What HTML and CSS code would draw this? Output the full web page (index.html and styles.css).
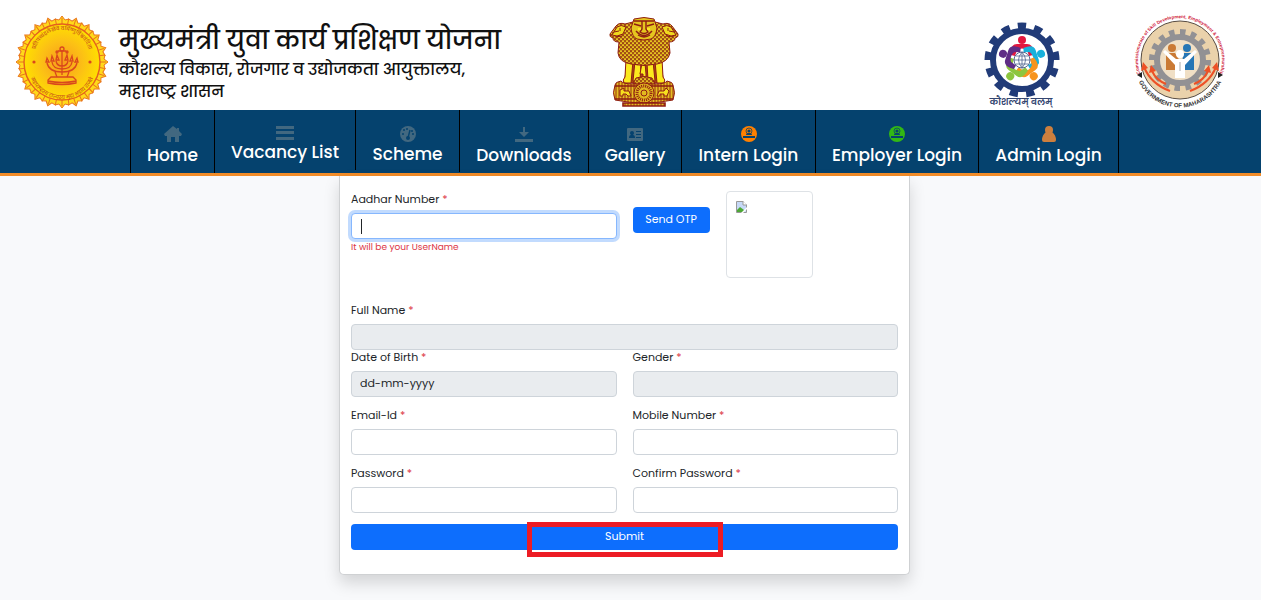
FILE: index.html
```
<!DOCTYPE html>
<html lang="en">
<head>
    <meta charset="utf-8">
    <meta name="viewport" content="width=device-width, initial-scale=1.0">
    <title>मुख्यमंत्री युवा कार्य प्रशिक्षण योजना</title>
    <link rel="stylesheet" href="styles.css">
</head>

<body>
<header class="header">
    <div class="brand">
        <svg class="seal" viewBox="0 0 96 94" aria-hidden="true">
            <defs>
                <radialGradient id="sealFill">
                    <stop offset="0" stop-color="#f79a1c"/>
                    <stop offset=".55" stop-color="#fcc015"/>
                    <stop offset="1" stop-color="#ffdf00"/>
                </radialGradient>
                <path id="petal" d="M48 1 L51 5 L55 4 L54 12 H42 L41 4 L45 5 Z M48 3 V11" fill="#ffd91a" stroke="#e9751c" stroke-width="1"/>
                <g id="petals">
                    <use href="#petal"/>
                    <use href="#petal" transform="rotate(18 48 47)"/>
                    <use href="#petal" transform="rotate(36 48 47)"/>
                    <use href="#petal" transform="rotate(54 48 47)"/>
                    <use href="#petal" transform="rotate(72 48 47)"/>
                </g>
                <path id="sealTop" d="M20 43 A28 28 0 0 1 76 43"/>
                <path id="sealBottom" d="M14 50 A34 34 0 0 0 82 50"/>
            </defs>
            <use href="#petals"/>
            <use href="#petals" transform="rotate(90 48 47)"/>
            <use href="#petals" transform="rotate(180 48 47)"/>
            <use href="#petals" transform="rotate(270 48 47)"/>
            <circle cx="48" cy="47" r="38" fill="url(#sealFill)" stroke="#e4601e" stroke-width="1.4"/>
            <g fill="#c8501b" font-size="5" font-weight="500">
                <text><textPath href="#sealTop" startOffset="50%" text-anchor="middle">प्रतिपच्चंद्रलेखेव वर्धिष्णुर्विश्ववंदिता</textPath></text>
                <text><textPath href="#sealBottom" startOffset="50%" text-anchor="middle">महाराष्ट्रस्य राज्यस्य मुद्रा भद्राय राजते</textPath></text>
            </g>
            <circle cx="20" cy="47" r="1.6" fill="#d9471c"/>
            <circle cx="76" cy="47" r="1.6" fill="#d9471c"/>
            <g fill="none" stroke="#d9471c" stroke-width="1.3">
                <path d="M48 36 V60 M44 36 H52 M33 48 Q35 57 48 57 Q61 57 63 48 M38 47 Q39 54 48 54 Q57 54 58 47 M42 46 Q43 51 48 51 Q53 51 54 46 M41 57 L43 62 M55 57 L53 62"/>
                <path d="M37 62 H59 L62 65 V68 Q48 71 34 68 V65 Z M34 66 Q48 69 62 66"/>
                <path d="M32 47 L33 43 L35 47 Z M37 46 L38 41 L40 46 Z M42 45 L43 40 L45 45 Z M51 45 L53 40 L54 45 Z M56 46 L58 41 L59 46 Z M61 47 L63 43 L64 47 Z"/>
                <circle cx="48" cy="34" r="2"/>
                <circle cx="43" cy="37" r="1"/>
                <circle cx="53" cy="37" r="1"/>
            </g>
        </svg>
        <div class="brand-text">
            <h1>मुख्यमंत्री युवा कार्य प्रशिक्षण योजना</h1>
            <p>कौशल्य विकास, रोजगार व उद्योजकता आयुक्तालय,<br>महाराष्ट्र शासन</p>
        </div>
    </div>

    <svg class="emblem" viewBox="0 0 70 90" aria-hidden="true">
        <defs>
            <pattern id="mane" width="4" height="4" patternUnits="userSpaceOnUse">
                <rect width="4" height="4" fill="#e6c421"/>
                <path d="M0 0 Q2 4 4 0 M-2 2 Q0 6 2 2 M2 2 Q4 6 6 2" fill="none" stroke="#8d2a10" stroke-width=".9"/>
            </pattern>
            <pattern id="stripe" width="3" height="4" patternUnits="userSpaceOnUse">
                <rect width="3" height="4" fill="#e5bd22"/>
                <path d="M1 0 V4" stroke="#97330f" stroke-width="1"/>
            </pattern>
        </defs>
        <g stroke="#8f1d12" stroke-width="1">
            <path d="M19 43 L15 66 H55 L51 43 Z" fill="#a84614"/>
            <path d="M17 42 L16 60 Q13 63 15 66 H22 L24 44 Z M26 44 L24 64 H31 L32 45 Z M38 45 L39 64 H46 L44 44 Z M46 44 L48 66 H55 Q57 63 54 60 L53 42 Z" fill="#fbe91e"/>
            <path d="M33 46 L31 57 H34 V66 H37 V57 L36 46 Z" fill="#fbe91e"/>
            <path d="M24 5 L16 7 Q10 5 7 9 L1 17 Q0 20 4 21 Q4 25 10 25 L9 36 Q10 45 22 47 Q35 50 48 47 Q59 45 61 36 L60 25 Q66 25 66 21 Q70 20 69 17 L63 9 Q60 5 54 7 L46 5 Z" fill="url(#mane)"/>
            <path d="M8 10 Q12 7 17 10 L14 17 L8 19 L3 18 Z M62 10 Q58 7 53 10 L56 17 L62 19 L67 18 Z" fill="#efd91f"/>
            <path d="M5 15 L10 14 M6 20 L13 19 M11 11 V14 M65 15 L60 14 M64 20 L57 19 M59 11 V14" fill="none"/>
            <path d="M25 2 Q35 -1 45 2 L48 11 Q47 20 42 22 Q35 24 28 22 Q23 20 22 11 Z" fill="#e5c51f"/>
            <path d="M25 7 L32 9 M38 9 L45 7 M33 4 V12 L31 15 Q35 18 39 15 L37 12 V4 M27 14 Q35 23 43 14 M29 18 Q35 22 41 18 M25 4 H45" fill="none" stroke-width="1.4"/>
            <path d="M29 12 H32 M38 12 H41" stroke="#fff22a" stroke-width="1.6"/>
            <path d="M27 61 Q35 58 43 61 L46 67 H24 Z" fill="url(#mane)"/>
            <path d="M12 64 Q6 65 6 68 Q3 76 6 83 Q35 89 64 83 Q67 76 64 68 Q64 65 58 64 Q56 67 46 67 H24 Q14 67 12 64 Z" fill="url(#stripe)"/>
            <path d="M6 69 H64 M6 82 H64" stroke-width="1.4"/>
            <path d="M11 79 V73 L15 71 V74 H20 L22 79 H19 L17 77 H14 V79 Z M48 79 L50 74 H55 L57 71 L60 74 L58 79 H55 V77 H51 V79 Z" fill="#f7e01e"/>
            <circle cx="35" cy="76" r="10" fill="#e2b91f"/>
            <circle cx="35" cy="76" r="7" fill="none" stroke-width="3" stroke-dasharray="1 1"/>
            <circle cx="35" cy="76" r="3" fill="none"/>
            <path d="M14 86 H56 V89 H14 Z" fill="url(#stripe)" stroke-width="1.6"/>
        </g>
    </svg>

    <div class="partners">
        <svg class="gear" viewBox="0 0 80 86" aria-hidden="true">
            <circle cx="40" cy="41" r="33" fill="none" stroke="#213b78" stroke-width="9" pathLength="26" stroke-dasharray="1 1" transform="rotate(-97 40 41)"/>
            <circle cx="40" cy="41" r="29" fill="#fff" stroke="#213b78" stroke-width="6"/>
            <defs>
                <g id="person">
                    <circle cx="40" cy="21" r="4"/>
                    <path d="M29 36 Q28 25 35 25 H45 Q52 25 51 36 L47 37 L45 31 Q40 28 35 31 L33 37 Z"/>
                </g>
            </defs>
            <use href="#person" fill="#e2173f" transform="rotate(0 40 41)"/>
            <use href="#person" fill="#19b1dc" transform="rotate(72 40 41)"/>
            <use href="#person" fill="#f7941e" transform="rotate(144 40 41)"/>
            <use href="#person" fill="#8dc63f" transform="rotate(216 40 41)"/>
            <use href="#person" fill="#5f2d86" transform="rotate(288 40 41)"/>
            <circle cx="40" cy="41" r="8" fill="#fff" stroke="#51658f"/>
            <path d="M32 41 H48 M34 37 H46 M34 45 H46 M40 33 V49 M40 33 Q33 41 40 49 M40 33 Q47 41 40 49" fill="none" stroke="#51658f" stroke-width=".8"/>
            <text x="39" y="86" text-anchor="middle" font-size="9" font-weight="600" fill="#33456f">कौशल्यम् बलम्</text>
        </svg>
        <svg class="gov" viewBox="0 0 96 94" aria-hidden="true">
            <defs>
                <path id="govTop" d="M10 63 A42 42 0 1 1 86 63"/>
                <path id="govBottom" d="M3 56 A46 46 0 0 0 93 56"/>
            </defs>
            <circle cx="48" cy="45" r="39" fill="#ead2ab" stroke="#574c42" stroke-width="1"/>
            <circle cx="48" cy="45" r="28" fill="none" stroke="#929194" stroke-width="6" pathLength="32" stroke-dasharray="1 1"/>
            <circle cx="48" cy="45" r="23" fill="#f0dfc5" stroke="#929194" stroke-width="6"/>
            <circle cx="40" cy="33" r="4" fill="#ca7a35"/>
            <circle cx="55" cy="33" r="4" fill="#2676b5"/>
            <path d="M34 38 H43 L48 46 V55 H34 Z" fill="#ca7a35"/>
            <path d="M51 38 H62 V55 H50 Z" fill="#2676b5"/>
            <circle cx="48" cy="39" r="4" fill="#fff"/>
            <path d="M31 37 L33 35 L44 44 H52 L63 35 L65 37 L53 50 V63 H43 V50 Z" fill="#fff"/>
            <path d="M48 47 V56" stroke="#aaa"/>
            <g fill="none" stroke="#ed5126" stroke-width="2">
                <path d="M38 76 Q19 69 12 52 M34 69 Q24 65 20 56 M58 76 Q77 69 84 52 M62 69 Q72 65 76 56"/>
            </g>
            <path d="M11 47 L9 56 L16 53 Z M19 50 L17 58 L24 56 Z M85 47 L87 56 L80 53 Z M77 50 L79 58 L72 56 Z" fill="#ed5126"/>
            <text class="ring" font-size="4.6" fill="#cf2039"><textPath href="#govTop" startOffset="50%" text-anchor="middle">Commissionerate of Skill Development, Employment &amp; Entrepreneurship</textPath></text>
            <text class="ring" font-size="6" fill="#333"><textPath href="#govBottom" startOffset="50%" text-anchor="middle">GOVERNMENT OF MAHARASHTRA</textPath></text>
            <path d="M5 60 L10 57 V63 Z M91 60 L86 57 V63 Z" fill="#222"/>
        </svg>
    </div>
</header>

<nav class="navbar">
    <ul class="menu">
        <li><a href="#">
            <svg class="icon" viewBox="0 0 18 16"><path d="M9 0 L0 8 L1 10 H3 V16 H7 V11 H11 V16 H15 V10 H17 L18 8 L15 5 V2 H13 V3 Z"/></svg>
            Home</a></li>
        <li><a href="#">
            <svg class="icon icon-bars" viewBox="0 0 18 13"><path d="M0 0 H18 V3 H0 Z M0 5 H18 V8 H0 Z M0 11 H18 V14 H0 Z"/></svg>
            Vacancy List</a></li>
        <li><a href="#">
            <svg class="icon icon-gauge" viewBox="0 0 16 15"><circle cx="8" cy="8" r="8"/><path d="M8 12 L10 4" stroke="#05426e" stroke-width="1.4"/><g fill="#05426e"><circle cx="8" cy="12" r="2"/><circle cx="3" cy="8" r="1"/><circle cx="4" cy="4" r="1"/><circle cx="7" cy="3" r="1"/><circle cx="12" cy="5" r="1"/><circle cx="13" cy="8" r="1"/></g></svg>
            Scheme</a></li>
        <li><a href="#">
            <svg class="icon" viewBox="0 0 18 16"><path d="M8 1 H10 V6 H14 L9 11 L4 6 H8 Z M0 13 H18 V16 H0 Z"/></svg>
            Downloads</a></li>
        <li><a href="#">
            <svg class="icon" viewBox="0 0 18 16"><path fill-rule="evenodd" d="M2 2 H16 Q17 2 17 3 V14 Q17 15 16 15 H2 Q1 15 1 14 V3 Q1 2 2 2 Z M10 5 V6 H15 V5 Z M10 8 V9 H15 V8 Z M10 11 V12 H15 V11 Z M3 12 H9 Q9 9 7 9 Q8 8 8 7 Q8 5 6 5 Q4 5 4 7 Q4 8 5 9 Q3 9 3 12 Z"/></svg>
            Gallery</a></li>
        <li><a href="#">
            <svg class="icon icon-intern" viewBox="0 0 18 16"><circle cx="9" cy="8" r="8"/><circle cx="9" cy="5" r="3" fill="none" stroke="#05426e" stroke-width=".8"/><g fill="#05426e"><circle cx="9" cy="5" r="1.600"/><path d="M6 9 Q6 7 9 7 Q12 7 12 9 Z M3 10 H15 V12 H3 Z"/></g></svg>
            Intern Login</a></li>
        <li><a href="#">
            <svg class="icon icon-employer" viewBox="0 0 18 16"><circle cx="9" cy="8" r="8"/><circle cx="9" cy="5" r="3" fill="none" stroke="#05426e" stroke-width=".8"/><g fill="#05426e"><circle cx="9" cy="5" r="1.600"/><path d="M6 9 Q6 7 9 7 Q12 7 12 9 Z M3 10 H15 V12 H3 Z"/></g></svg>
            Employer Login</a></li>
        <li><a href="#">
            <svg class="icon icon-admin" viewBox="0 0 18 16"><circle cx="9" cy="4" r="4"/><path d="M6 6 H12 Q16 9 16 14 Q16 16 14 16 H4 Q2 16 2 14 Q2 9 6 6 Z"/></svg>
            Admin Login</a></li>
    </ul>
</nav>

<main class="content">
    <form class="card">
        <div class="row row-top">
            <div class="field">
                <label for="aadhar">Aadhar Number <span class="req">*</span></label>
                <input type="text" id="aadhar" class="active">
                <small class="hint">It will be your UserName</small>
            </div>
            <div class="otp">
                <button type="button" class="btn btn-otp">Send OTP</button>
                <div class="photo">
                    <!-- missing photo icon -->
                    <svg class="no-photo" viewBox="0 0 11 12"><path d="M.5 .5 H7 L10.500 4 V11.500 H.5 Z" fill="#c6d9f7" stroke="#999"/><path d="M7 0 V4 H11" fill="#fff" stroke="#999"/><path d="M1 11 V9 L4 6 L8 9 V11 Z" fill="#4da836"/><path d="M5 12 L11 6 V8 L7 12 Z" fill="#fff"/></svg>
                </div>
            </div>
        </div>
        <div class="field">
            <label for="fullname">Full Name <span class="req">*</span></label>
            <input type="text" id="fullname" disabled>
        </div>
        <div class="row">
            <div class="field">
                <label for="dob">Date of Birth <span class="req">*</span></label>
                <input type="text" id="dob" value="dd-mm-yyyy" disabled>
            </div>
            <div class="field">
                <label for="gender">Gender <span class="req">*</span></label>
                <input type="text" id="gender" disabled>
            </div>
            <div class="field">
                <label for="email">Email-Id <span class="req">*</span></label>
                <input type="email" id="email">
            </div>
            <div class="field">
                <label for="mobile">Mobile Number <span class="req">*</span></label>
                <input type="tel" id="mobile">
            </div>
            <div class="field">
                <label for="password">Password <span class="req">*</span></label>
                <input type="password" id="password">
            </div>
            <div class="field">
                <label for="confirm">Confirm Password <span class="req">*</span></label>
                <input type="password" id="confirm">
            </div>
        </div>
        <div class="submit">
            <button type="submit" class="btn btn-submit">Submit</button>
        </div>
    </form>
</main>
</body>
</html>
```
FILE: styles.css
```
*, *:before, *:after {
    box-sizing: border-box;
}

body {
    margin: 0;
    font-family: Poppins, Inter, "Noto Sans", sans-serif;
    font-size: 11px;
    line-height: 14px;
    color: #212529;
    background: #f8f9fb;
}

/* header */
.header {
    display: flex;
    align-items: center;
    min-height: 110px;
    padding: 14px 33px 0 14px;
    background: #fff;
}
.brand {
    display: flex;
    align-items: center;
    flex: 0 0 49%;
    gap: 9px;
}
.brand-text {
    padding-top: 2px;
    color: #111;
    white-space: nowrap;
}
.brand h1 {
    margin: 0;
    font-size: 25px;
    font-weight: 500;
    line-height: 36px;
}
.brand p {
    margin: 0;
    font-size: 16px;
    font-weight: 500;
    line-height: 22px;
}
.seal {
    width: 96px;
    height: 94px;
    flex: none;
}
.emblem {
    width: 70px;
    height: 90px;
    flex: none;
}
.partners {
    display: flex;
    align-items: center;
    gap: 70px;
    margin-left: auto;
}
.gear {
    width: 80px;
    height: 86px;
    overflow: visible;
}
.gov {
    width: 96px;
    height: 94px;
    overflow: visible;
}
.ring {
    font-family: "Liberation Sans", Arial, sans-serif;
    font-weight: bold;
}

/* menu */
.navbar {
    padding-right: 12px;
    background: #05426e;
    border-bottom: 3px solid #f28c28;
}
.menu {
    display: grid;
    grid-template-columns: 85fr 141fr 104fr 129fr 93fr 134fr 163fr 140fr;
    align-items: start;
    max-width: 989px;
    margin: 0 auto;
    padding: 0;
    list-style: none;
}
.menu li {
    border-right: 1px solid #000;
}
.menu li:first-child {
    border-left: 1px solid #000;
}
.menu a {
    display: block;
    padding: 16px 0 4px;
    font-size: 17px;
    font-weight: 500;
    line-height: 27px;
    color: #fff;
    text-align: center;
    text-decoration: none;
    white-space: nowrap;
}
.icon {
    display: block;
    width: 18px;
    height: 16px;
    margin: 0 auto;
    fill: #426880;
    overflow: visible;
}
.icon-bars {
    height: 13px;
}
.icon-gauge {
    height: 15px;
}
.icon-intern {
    fill: #ff8000;
}
.icon-employer {
    fill: #32b814;
}
.icon-admin {
    fill: #cd7f3e;
}

/* form */
.content {
    padding: 0 12px 25px 0;
}
.card {
    max-width: 571px;
    margin: 0 auto;
    padding: 15px 11px 24px;
    background: #fff;
    border: 1px solid #cfd1d3;
    border-top: 0;
    border-radius: 0 0 5px 5px;
    box-shadow: 0 8px 16px rgba(0,0,0,.15);
}
.row {
    display: grid;
    grid-template-columns: 1fr 1fr;
    gap: 11px 16px;
}
.row-top {
    min-height: 112px;
    align-items: start;
}
.field {
    display: flex;
    flex-direction: column;
}
.row-top .field {
    padding-top: 1px;
}
.field label {
    margin-bottom: 7px;
}
.req {
    color: #dc3545;
}
.field input {
    width: 100%;
    height: 26px;
    padding: 3px 8px 5px;
    font: inherit;
    color: #212529;
    background: #fff;
    border: 1px solid #ced4da;
    border-radius: 4px;
    outline: 0;
}
.field input:disabled {
    background: #e9ecef;
}
.field input:focus,
.field input.active {
    border-color: #86b7fe;
    box-shadow: 0 0 0 3px rgba(13,110,253,.25);
}
/* cursor line of the active box */
.field input.active {
    background: #fff linear-gradient(#212529, #212529) no-repeat 9px 50% / 1px 15px;
}
.field input.active:focus {
    background: #fff;
}
.hint {
    padding-top: 1px;
    font-size: 9px;
    color: #dc3545;
}
.otp {
    display: flex;
    align-items: flex-start;
    gap: 16px;
}
.btn {
    height: 26px;
    padding: 0 8px 2px;
    font: inherit;
    color: #fff;
    background: #0d6efd;
    border: 0;
    border-radius: 4px;
    cursor: pointer;
}
.btn-otp {
    width: 77px;
    margin-top: 16px;
}
.photo {
    width: 87px;
    height: 87px;
    padding: 9px;
    border: 1px solid #dee2e6;
    border-radius: 4px;
}
.no-photo {
    display: block;
    width: 11px;
    height: 12px;
}
.submit {
    position: relative;
    margin-top: 11px;
}
.btn-submit {
    display: block;
    width: 100%;
}
/* red frame over the button */
.submit:after {
    content: "";
    position: absolute;
    top: -2px;
    bottom: -7px;
    left: 50%;
    width: 196px;
    margin-left: -98px;
    border: 5px solid #ed1c24;
    pointer-events: none;
}
```
